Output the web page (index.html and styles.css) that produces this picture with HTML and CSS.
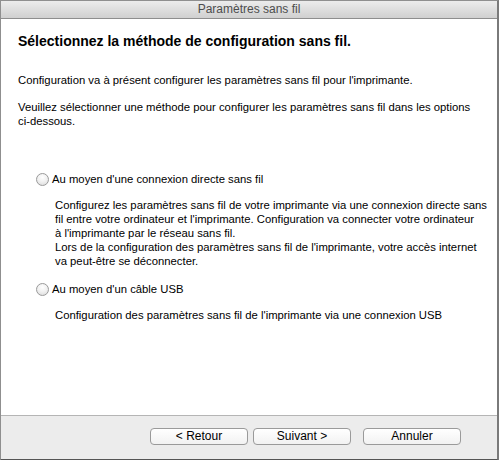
FILE: index.html
```html
<!DOCTYPE html>
<html lang="fr">
<head>
<meta charset="utf-8">
<link rel="stylesheet" href="styles.css">
</head>
<body>
<div class="window">
  <div class="titlebar">Paramètres sans fil</div>
  <div class="content">
    <h1 class="heading">Sélectionnez la méthode de configuration sans fil.</h1>
    <p class="para">Configuration va à présent configurer les paramètres sans fil pour l'imprimante.</p>
    <p class="para">Veuillez sélectionner une méthode pour configurer les paramètres sans fil dans les options <span class="nowrap">ci-dessous.</span></p>
    <div class="option first">
      <label class="radio-row"><span class="radio"></span>Au moyen d'une connexion directe sans fil</label>
      <p class="desc">Configurez les paramètres sans fil de votre imprimante via une connexion directe sans<br>fil entre votre ordinateur et l'imprimante. Configuration va connecter votre ordinateur<br>à l'imprimante par le réseau sans fil.<br>Lors de la configuration des paramètres sans fil de l'imprimante, votre accès internet<br>va peut-être se déconnecter.</p>
    </div>
    <div class="option">
      <label class="radio-row"><span class="radio"></span>Au moyen d'un câble USB</label>
      <p class="desc">Configuration des paramètres sans fil de l'imprimante via une connexion USB</p>
    </div>
  </div>
  <div class="footer">
    <button class="btn btn-back">&lt; Retour</button>
    <button class="btn">Suivant &gt;</button>
    <button class="btn btn-cancel">Annuler</button>
  </div>
</div>
</body>
</html>
```
FILE: styles.css
```css
html, body {
  margin: 0;
  padding: 0;
  background: #ffffff;
}
body {
  width: 500px;
  height: 460px;
  overflow: hidden;
  font-family: "Liberation Sans", Arial, sans-serif;
  color: #000;
}
.window {
  width: 496px;
  height: 458px;
  border: 1px solid #8f8f8f;
  border-right: 2px solid #7a7a7a;
  border-bottom: 2px solid #555;
  display: flex;
  flex-direction: column;
  background: #fff;
}
.titlebar {
  height: 17px;
  line-height: 17px;
  text-align: center;
  font-size: 12px;
  color: #4d4d4d;
  background: linear-gradient(#ececec, #d0d0d0);
  border-bottom: 1px solid #8e8e8e;
}
.content {
  flex: 1;
  padding: 12px 5px 0 17px;
  font-size: 11.3px;
}
.nowrap {
  white-space: nowrap;
}
.heading {
  margin: 0 0 22px 0;
  font-size: 14px;
  font-weight: bold;
  line-height: 20px;
}
.para {
  margin: 0 0 13px 0;
  line-height: 14px;
}
.option.first {
  margin-top: 43px;
}
.option {
  padding-left: 18px;
}
.radio-row {
  display: flex;
  align-items: center;
  gap: 3px;
  height: 16px;
}
.radio {
  width: 13px;
  height: 13px;
  border-radius: 50%;
  border: 1px solid #9a9a9a;
  background: radial-gradient(circle at 50% 30%, #ffffff 0%, #f0f0f0 50%, #d8d8d8 100%);
  box-sizing: border-box;
}
.desc {
  margin: 11px 0 13px 19px;
  line-height: 14px;
}
.footer {
  height: 44px;
  background: #ececec;
  border-top: 1px solid #b5b5b5;
  display: flex;
  align-items: center;
  padding-left: 149px;
  padding-bottom: 3px;
  box-sizing: border-box;
}
.btn {
  width: 98px;
  height: 17px;
  margin-right: 5px;
  border: 1px solid #9a9a9a;
  border-radius: 4px;
  background: linear-gradient(#ffffff, #f2f2f2);
  font-family: inherit;
  font-size: 12px;
  color: #000;
  padding: 0;
  line-height: 15px;
}
.btn-cancel {
  margin-left: 7px;
}
```
